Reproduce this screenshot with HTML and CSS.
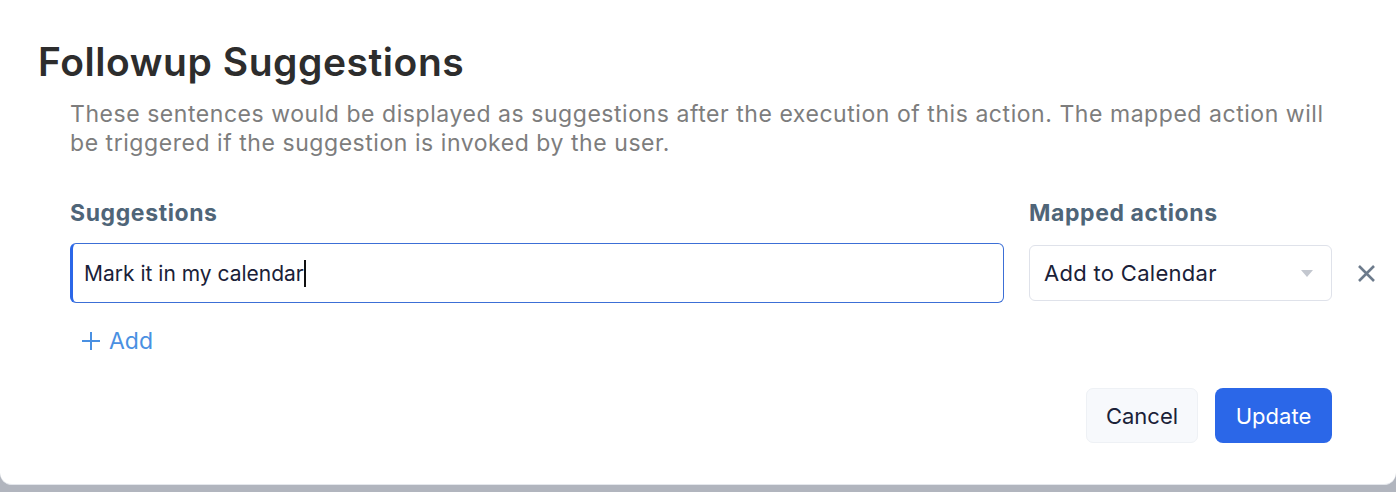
FILE: index.html
```html
<!DOCTYPE html>
<html>
<head>
<meta charset="utf-8">
<link rel="stylesheet" href="styles.css">
</head>
<body>
<div class="modal">
  <h1 class="title">Followup Suggestions</h1>
  <div class="content">
    <p class="desc">These sentences would be displayed as suggestions after the execution of this action. The mapped action will be triggered if the suggestion is invoked by the user.</p>
    <div class="grid">
      <div class="label">Suggestions</div>
      <div class="label">Mapped actions</div>
      <div></div>
      <div class="input"><span>Mark it in my calendar</span><span class="cursor"></span></div>
      <div class="select"><span>Add to Calendar</span><span class="caret"></span></div>
      <div class="remove">
        <svg width="19" height="19" viewBox="0 0 19 19"><path d="M2 2 L17 17 M17 2 L2 17" stroke="#6d7b8c" stroke-width="2.6" stroke-linecap="butt"/></svg>
      </div>
    </div>
    <div class="add">
      <svg width="22" height="22" viewBox="0 0 22 22"><path d="M11 2 V20 M2 11 H20" stroke="#4a90e2" stroke-width="2"/></svg>
      <span>Add</span>
    </div>
    <div class="footer">
      <button class="btn cancel">Cancel</button>
      <button class="btn update">Update</button>
    </div>
  </div>
</div>
</body>
</html>
```
FILE: styles.css
```css
html, body {
  margin: 0;
  padding: 0;
}
body {
  background: #b1b5be;
  font-family: Inter, "Noto Sans", sans-serif;
  height: 492px;
  overflow: hidden;
}
.modal {
  background: #fff;
  height: 485px;
  border-bottom-left-radius: 12px;
  border-bottom-right-radius: 12px;
  border-bottom: 1px solid #e4e7ec;
  box-sizing: border-box;
  padding: 38px 0 0 38px;
}
.title {
  margin: 0;
  font-size: 39px;
  font-weight: 600;
  color: #2d2d2d;
  line-height: 48px;
  letter-spacing: 0.55px;
}
.content {
  padding: 0 64px 0 32px;
}
.desc {
  margin: 14px 0 0 0;
  font-size: 23px;
  line-height: 29px;
  letter-spacing: 0.55px;
  color: #7d7d7d;
  max-width: 1285px;
}
.grid {
  margin-top: 41px;
  display: grid;
  grid-template-columns: 934px 303px 1fr;
  column-gap: 25px;
  row-gap: 16px;
  align-items: center;
}
.label {
  font-size: 23px;
  font-weight: 700;
  color: #4f6578;
  line-height: 28px;
  letter-spacing: 0.6px;
}
.input {
  height: 60px;
  box-sizing: border-box;
  border: 1px solid #3c6fd6;
  border-left: 3px solid #2b67e8;
  border-radius: 6px;
  display: flex;
  align-items: center;
  padding-left: 11px;
  font-size: 21px;
  color: #1a2138;
}
.cursor {
  display: inline-block;
  width: 2px;
  height: 27px;
  background: #111;
}
.select {
  height: 56px;
  box-sizing: border-box;
  border: 1px solid #dfe2ea;
  border-radius: 6px;
  display: flex;
  align-items: center;
  justify-content: space-between;
  padding: 0 18px 0 14px;
  font-size: 22px;
  letter-spacing: 0.3px;
  color: #1a2138;
}
.caret {
  width: 0;
  height: 0;
  border-left: 6px solid transparent;
  border-right: 6px solid transparent;
  border-top: 7px solid #c3c7cf;
}
.remove {
  display: flex;
  align-items: center;
  padding-left: 0;
}
.add {
  margin-top: 24px;
  margin-left: 10px;
  display: flex;
  align-items: center;
  gap: 7px;
  color: #4a90e2;
  font-size: 23px;
  line-height: 28px;
}
.footer {
  display: flex;
  justify-content: flex-end;
  gap: 17px;
  margin-top: 33px;
}
.btn {
  font-family: Inter, "Noto Sans", sans-serif;
  font-size: 22px;
  height: 55px;
  border-radius: 7px;
  cursor: pointer;
}
.cancel {
  width: 112px;
  background: #f7f9fc;
  border: 1px solid #eef1f5;
  color: #1a2138;
}
.update {
  width: 117px;
  background: #2b67e8;
  border: none;
  color: #fff;
  border-radius: 8px;
}
```
